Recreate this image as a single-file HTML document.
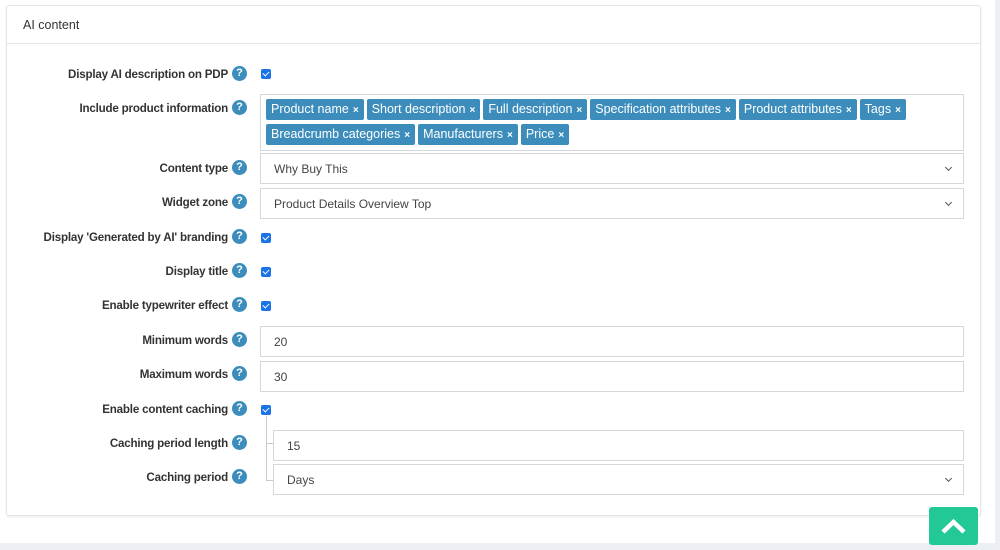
<!DOCTYPE html>
<html><head><style>
*{box-sizing:border-box;margin:0;padding:0}
body{width:1000px;height:550px;background:#fff;font-family:"Liberation Sans",sans-serif;position:relative;overflow:hidden}
.strip-b{position:absolute;left:0;top:543px;width:1000px;height:7px;background:#eceff3}
.strip-r{position:absolute;left:995px;top:0;width:5px;height:550px;background:#eceff3}
.card{position:absolute;left:6px;top:5px;width:975px;height:511px;border:1px solid #e3e5e8;border-radius:3px;box-shadow:0 1px 2px rgba(0,0,0,.08);background:#fff}
.hdr{height:38px;border-bottom:1px solid #e3e5e8;padding:12px 16px;font-size:12.5px;color:#333}
.lbl{position:absolute;right:772px;font-size:11.6px;font-weight:bold;color:#333;white-space:nowrap;letter-spacing:-.2px}
.q{position:absolute;left:232px;width:15px;height:15px;border-radius:50%;background:#3c8dbc;color:#fff;font-size:11px;font-weight:bold;text-align:center;line-height:15px}
.cb{position:absolute;left:261px;width:10px;height:10px;background:#1a73e8;border-radius:2px}
.cb:after{content:"";position:absolute;left:3px;top:1px;width:3px;height:5px;border:solid #fff;border-width:0 1.5px 1.5px 0;transform:rotate(45deg)}
.inp{position:absolute;left:260px;width:704px;height:31px;border:1px solid #d4d8dd;font-size:12px;color:#444;padding:8px 13px}
.sel:after{content:"";position:absolute;right:12px;top:11px;width:4px;height:4px;border:solid #555;border-width:0 1.5px 1.5px 0;transform:rotate(45deg)}
.tags{position:absolute;left:260px;top:94px;width:704px;height:57px;border:1px solid #d4d8dd;padding:4px 5px}
.t{display:inline-block;background:#3c8dbc;color:#fff;font-size:12.5px;height:21px;line-height:21px;padding:0 5px;border-radius:2px;margin:0 3px 4px 0}
.t b{font-size:10px;margin-left:4px}
.line{position:absolute;background:#c8ccd0}
.top{position:absolute;left:929px;top:507px;width:49px;height:38px;background:#22c997;border-radius:3px}
</style></head><body>
<div class="strip-b"></div><div class="strip-r"></div>
<div class="card"><div class="hdr">AI content</div></div>

<div class="lbl" style="top:68px">Display AI description on PDP</div><div class="q" style="top:66px">?</div><div class="cb" style="top:69px"></div>
<div class="lbl" style="top:102px">Include product information</div><div class="q" style="top:100px">?</div>
<div class="tags"><span class="t">Product name<b>×</b></span><span class="t">Short description<b>×</b></span><span class="t">Full description<b>×</b></span><span class="t">Specification attributes<b>×</b></span><span class="t">Product attributes<b>×</b></span><span class="t">Tags<b>×</b></span><span class="t">Breadcrumb categories<b>×</b></span><span class="t">Manufacturers<b>×</b></span><span class="t">Price<b>×</b></span></div>
<div class="lbl" style="top:162px">Content type</div><div class="q" style="top:160px">?</div><div class="inp sel" style="top:153px">Why Buy This</div>
<div class="lbl" style="top:196px">Widget zone</div><div class="q" style="top:194px">?</div><div class="inp sel" style="top:188px">Product Details Overview Top</div>
<div class="lbl" style="top:231px">Display 'Generated by AI' branding</div><div class="q" style="top:229px">?</div><div class="cb" style="top:233px"></div>
<div class="lbl" style="top:265px">Display title</div><div class="q" style="top:263px">?</div><div class="cb" style="top:267px"></div>
<div class="lbl" style="top:299px">Enable typewriter effect</div><div class="q" style="top:297px">?</div><div class="cb" style="top:301px"></div>
<div class="lbl" style="top:334px">Minimum words</div><div class="q" style="top:332px">?</div><div class="inp" style="top:326px">20</div>
<div class="lbl" style="top:368px">Maximum words</div><div class="q" style="top:366px">?</div><div class="inp" style="top:361px">30</div>
<div class="lbl" style="top:403px">Enable content caching</div><div class="q" style="top:401px">?</div><div class="cb" style="top:405px"></div>
<div class="line" style="left:266px;top:416px;width:1px;height:65px"></div>
<div class="line" style="left:266px;top:443px;width:7px;height:1px"></div>
<div class="line" style="left:266px;top:480px;width:7px;height:1px"></div>
<div class="lbl" style="top:437px">Caching period length</div><div class="q" style="top:435px">?</div><div class="inp" style="top:430px;left:273px;width:691px">15</div>
<div class="lbl" style="top:471px">Caching period</div><div class="q" style="top:469px">?</div><div class="inp sel" style="top:464px;left:273px;width:691px">Days</div>
<div class="top"><svg width="49" height="38" viewBox="0 0 49 38"><path d="M14 25 L24.5 15 L35 25" fill="none" stroke="#fff" stroke-width="4.5"/></svg></div>
</body></html>
